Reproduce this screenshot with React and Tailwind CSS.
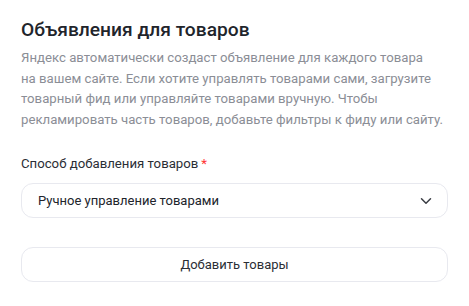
import { ChevronDown } from "lucide-react";

const App = () => {
  return (
    <div className="w-[469px] h-[306px] bg-white px-[21px] pt-[16px] font-['Roboto',sans-serif]">
      <h1 className="text-[19.2px] leading-[28px] font-medium text-[#21242b]">
        Объявления для товаров
      </h1>
      <p className="mt-[4px] text-[13.2px] leading-[20.5px] text-[#8b8e96] whitespace-nowrap">
        Яндекс автоматически создаст объявление для каждого товара
        <br />
        на вашем сайте. Если хотите управлять товарами сами, загрузите
        <br />
        товарный фид или управляйте товарами вручную. Чтобы
        <br />
        рекламировать часть товаров, добавьте фильтры к фиду или сайту.
      </p>

      <div className="mt-[24px]">
        <div className="text-[13.2px] leading-[20px] text-[#2b2e35]">
          Способ добавления товаров
          <span className="text-[#f33] ml-[3px]">*</span>
        </div>
        <button className="mt-[9px] w-full h-[35px] flex items-center justify-between pl-[16px] pr-[12px] rounded-[12px] border border-[#e8e9ef] text-[13px] text-[#21242b]">
          <span>Ручное управление товарами</span>
          <ChevronDown className="w-[18px] h-[18px] text-[#3a3d44]" strokeWidth={2} />
        </button>
      </div>

      <button className="mt-[29px] w-full h-[35px] flex items-center justify-center rounded-[12px] border border-[#e8e9ef] text-[13px] text-[#2b2e35]">
        Добавить товары
      </button>
    </div>
  );
};

export default App;
